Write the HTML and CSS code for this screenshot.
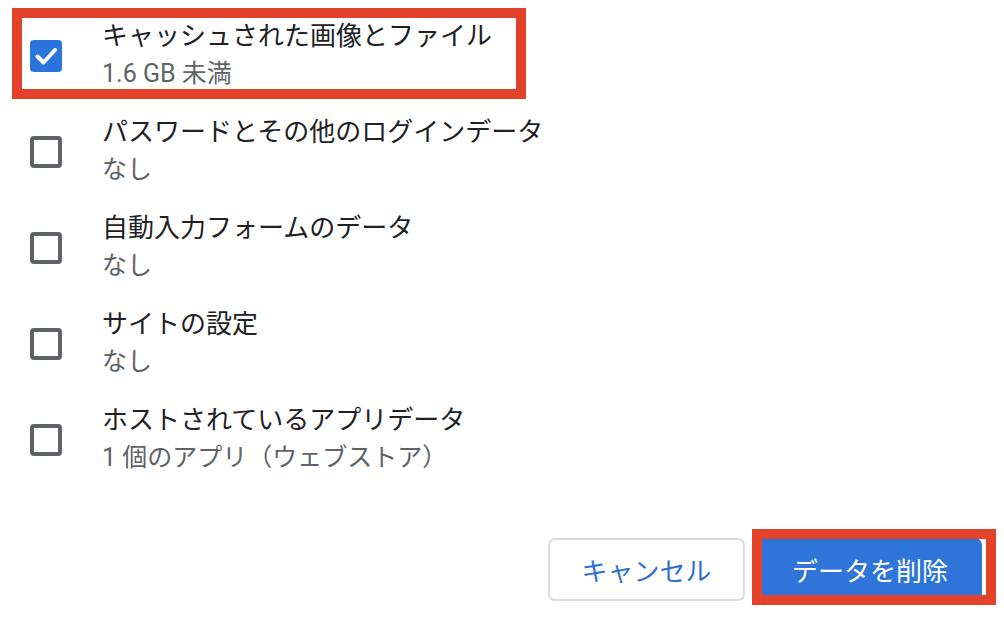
FILE: index.html
```html
<!DOCTYPE html>
<html lang="ja">

<head>
    <meta charset="UTF-8">
    <title>閲覧履歴データの削除</title>
    <link rel="stylesheet" href="styles.css">
</head>

<body>
    <div class="dialog">
        <div class="item-list">
            <div class="item highlighted">
                <span class="checkbox checked">
                    <svg viewBox="0 0 32 32" width="32" height="32">
                        <path d="M7.5 16.5 L13.5 22.5 L25 10" fill="none" stroke="#fff" stroke-width="4" stroke-linecap="round" stroke-linejoin="round"/>
                    </svg>
                </span>
                <div class="item-text">
                    <div class="item-title">キャッシュされた画像とファイル</div>
                    <div class="item-sub">1.6 GB 未満</div>
                </div>
                <span class="mark mark-item"></span>
            </div>

            <div class="item">
                <span class="checkbox"></span>
                <div class="item-text">
                    <div class="item-title">パスワードとその他のログインデータ</div>
                    <div class="item-sub">なし</div>
                </div>
            </div>

            <div class="item">
                <span class="checkbox"></span>
                <div class="item-text">
                    <div class="item-title">自動入力フォームのデータ</div>
                    <div class="item-sub">なし</div>
                </div>
            </div>

            <div class="item">
                <span class="checkbox"></span>
                <div class="item-text">
                    <div class="item-title">サイトの設定</div>
                    <div class="item-sub">なし</div>
                </div>
            </div>

            <div class="item">
                <span class="checkbox"></span>
                <div class="item-text">
                    <div class="item-title">ホストされているアプリデータ</div>
                    <div class="item-sub">1 個のアプリ（ウェブストア）</div>
                </div>
            </div>
        </div>

        <div class="actions">
            <button class="btn btn-cancel">キャンセル</button>
            <span class="btn-wrap">
                <button class="btn btn-primary">データを削除</button>
                <span class="mark mark-btn"></span>
            </span>
        </div>
    </div>
</body>

</html>
```

FILE: styles.css
```css
* {
    margin: 0;
    padding: 0;
    box-sizing: border-box;
}

body {
    background: #ffffff;
    font-family: Roboto, "Noto Sans CJK JP", sans-serif;
    color: #202124;
}

.dialog {
    width: 1004px;
    height: 624px;
    display: flex;
    flex-direction: column;
}

.item-list {
    padding-top: 8px;
}

.item {
    position: relative;
    height: 96px;
    display: flex;
    align-items: center;
    padding-left: 30px;
}

.checkbox {
    width: 32px;
    height: 32px;
    border: 4px solid #5f6368;
    border-radius: 4px;
    flex-shrink: 0;
    display: flex;
}

.checkbox.checked {
    border: none;
    background-color: #2b74de;
}

.item-text {
    margin-left: 40px;
    margin-top: -3px;
}

.item-title {
    font-size: 26px;
    line-height: 38px;
    color: #202124;
}

.item-sub {
    font-size: 25px;
    line-height: 38px;
    color: #5f6368;
}

.actions {
    margin-top: 50px;
    display: flex;
    justify-content: flex-end;
    align-items: center;
    gap: 13px;
    padding-right: 22px;
}

.btn {
    font-family: Roboto, "Noto Sans CJK JP", sans-serif;
    font-size: 26px;
    height: 63px;
    border-radius: 7px;
    cursor: pointer;
}

.btn-cancel {
    width: 197px;
    background: #ffffff;
    color: #2f6fce;
    border: 2px solid #dadce0;
}

.btn-wrap {
    position: relative;
    display: flex;
}

.btn-primary {
    width: 224px;
    background: #2f74d9;
    color: #ffffff;
    border: none;
}

/* red annotation frames */
.mark {
    position: absolute;
    border: 10px solid #e4412b;
    pointer-events: none;
}

.mark-item {
    top: 0;
    left: 12px;
    width: 514px;
    height: 91px;
}

.mark-btn {
    top: -9px;
    left: -6px;
    width: 244px;
    height: 76px;
}
```
